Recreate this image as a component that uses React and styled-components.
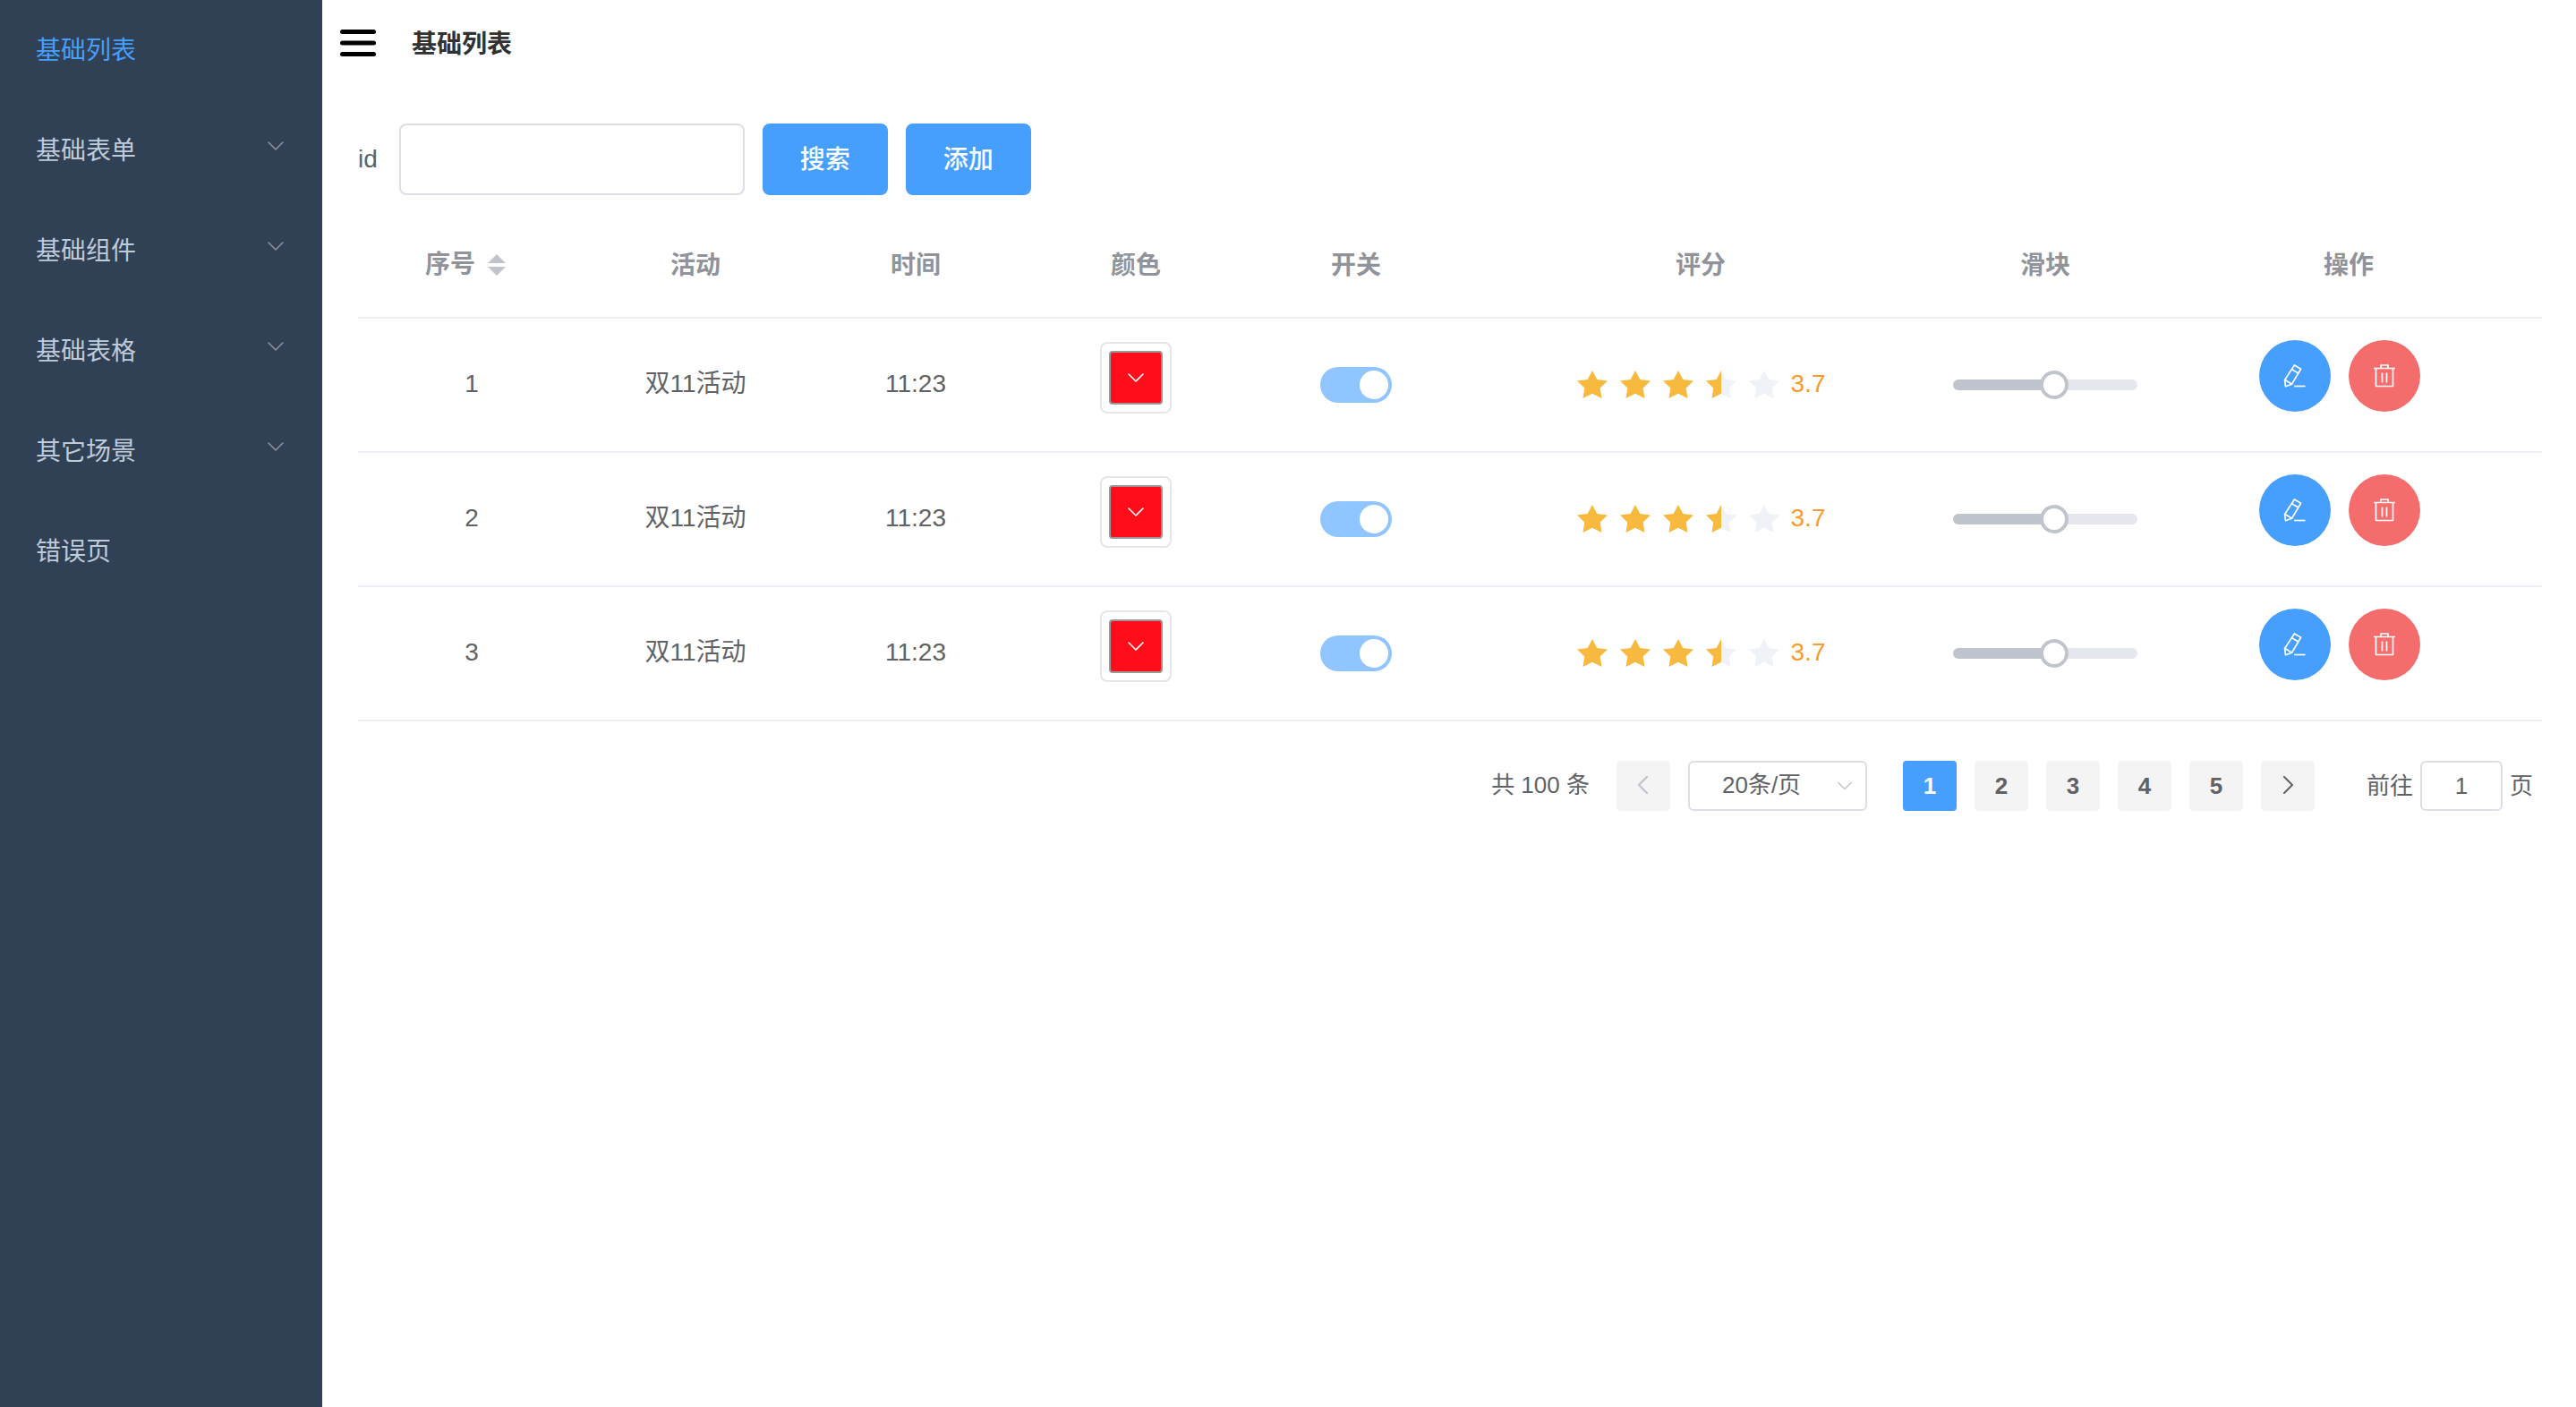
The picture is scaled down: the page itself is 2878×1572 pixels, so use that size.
import React, { useState } from "react";
import styled, { createGlobalStyle } from "styled-components";

const GlobalStyle = createGlobalStyle`
  *, *::before, *::after { box-sizing: border-box; }
  body {
    margin: 0;
    background: #fff;
    color: #606266;
    font-family: "Liberation Sans", "Noto Sans CJK SC", sans-serif;
    font-size: 28px;
    line-height: 40px;
  }
  button, input, select { font: inherit; color: inherit; margin: 0; }
  button { cursor: pointer; }
`;

const Layout = styled.div`
  display: flex;
  min-height: 100vh;
`;

const Sidebar = styled.nav`
  flex: 0 0 360px;
  background: #304156;
`;

const MenuList = styled.ul`
  list-style: none;
  margin: 0;
  padding: 0;
`;

const MenuLink = styled.a`
  display: flex;
  align-items: center;
  height: 112px;
  padding: 2px 40px 0;
  color: ${(p) => (p.$active ? "#479ffd" : "#bfcbd9")};
  text-decoration: none;
`;

const MenuToggle = styled.button`
  display: flex;
  align-items: center;
  justify-content: space-between;
  width: 100%;
  height: 112px;
  padding: 2px 43px 0 40px;
  border: 0;
  background: none;
  color: #bfcbd9;

  svg { margin-bottom: 12px; color: #909399; }
`;

const Main = styled.main`
  flex: 1;
  min-width: 0;
`;

const Header = styled.header`
  display: flex;
  align-items: center;
  gap: 40px;
  height: 96px;
  padding: 0 20px;
`;

const IconButton = styled.button`
  display: flex;
  padding: 0;
  border: 0;
  background: none;
`;

const Title = styled.h1`
  margin: 0;
  padding-top: 4px;
  font-size: 28px;
  font-weight: 700;
  color: #303133;
`;

const Content = styled.section`
  padding: 42px 38px 0 40px;
`;

const SearchForm = styled.form`
  display: flex;
  align-items: center;
  gap: 20px;
  margin-bottom: 20px;
`;

const Field = styled.label`
  display: flex;
  align-items: center;
  gap: 24px;
`;

const TextInput = styled.input`
  width: 386px;
  height: 80px;
  padding: 0 30px;
  border: 2px solid #dcdfe6;
  border-radius: 8px;
  background: #fff;
`;

const PrimaryButton = styled.button`
  width: 140px;
  height: 80px;
  padding: 2px 0 0;
  border: 0;
  border-radius: 8px;
  background: #479ffd;
  color: #fff;
  font-weight: 500;
`;

const Table = styled.table`
  width: 100%;
  table-layout: fixed;
  border-collapse: separate;
  border-spacing: 0;
  text-align: center;
`;

const HeadCell = styled.th`
  height: 118px;
  padding: ${(p) => (p.$sortable ? "0" : "2px 0 0")};
  border-bottom: 2px solid #ebeef5;
  color: #909399;
  font-weight: 700;
`;

const SortLabel = styled.span`
  display: inline-flex;
  align-items: center;
`;

const SortButton = styled(IconButton)`
  justify-content: center;
  width: 48px;
  color: #c0c4cc;
`;

const Cell = styled.td`
  height: 150px;
  padding: 24px 20px;
  border-bottom: 2px solid #ebeef5;
  vertical-align: ${(p) => (p.$top ? "top" : "middle")};
`;

const TextCell = styled(Cell)`
  padding-bottom: 26px;
`;

const ColorTrigger = styled.button`
  display: block;
  width: 80px;
  height: 80px;
  margin: 2px auto 0;
  padding: 8px;
  border: 2px solid #e6e6e6;
  border-radius: 8px;
  background: none;
`;

const Swatch = styled.span`
  display: flex;
  align-items: center;
  justify-content: center;
  height: 60px;
  border: 2px solid #999;
  border-radius: 4px;
  background: ${(p) => p.$color};
  color: #fff;
`;

const Switch = styled.input.attrs({ type: "checkbox", role: "switch" })`
  appearance: none;
  display: flex;
  align-items: center;
  justify-content: ${(p) => (p.checked ? "flex-end" : "flex-start")};
  width: 80px;
  height: 40px;
  margin: 0 auto;
  padding: 4px;
  border-radius: 20px;
  background: ${(p) => (p.checked ? "#91c5ff" : "#dcdfe6")};

  &::before {
    content: "";
    width: 32px;
    height: 32px;
    border-radius: 50%;
    background: #fff;
  }
`;

const Rating = styled.div`
  display: flex;
  align-items: center;
  justify-content: center;

  svg { margin-right: 12px; }
`;

const Score = styled.span`
  padding-bottom: 2px;
  color: #f99b2b;
`;

const Slider = styled.input.attrs({ type: "range" })`
  appearance: none;
  display: block;
  width: 100%;
  height: 32px;
  background: none;

  &::-webkit-slider-runnable-track {
    height: 12px;
    border-radius: 6px;
    background: linear-gradient(to right, #c0c4cc 50%, #e4e7ed 50%);
  }
  &::-webkit-slider-thumb {
    appearance: none;
    width: 32px;
    height: 32px;
    margin-top: -10px;
    border: 4px solid #c0c4cc;
    border-radius: 50%;
    background: #fff;
  }
`;

const Actions = styled.div`
  display: flex;
  justify-content: center;
`;

const RoundButton = styled.button`
  display: flex;
  align-items: center;
  justify-content: center;
  width: 80px;
  height: 80px;
  margin-right: 20px;
  padding: 0;
  border: 0;
  border-radius: 50%;
  background: ${(p) => (p.$danger ? "#f56c6c" : "#479ffd")};
  color: #fff;
`;

const Pagination = styled.nav`
  display: flex;
  align-items: center;
  justify-content: flex-end;
  gap: 20px;
  padding: 44px 10px;
  font-size: 26px;
`;

const Total = styled.span`
  margin-right: 10px;
  padding-bottom: 2px;
`;

const PageButton = styled.button`
  display: flex;
  align-items: center;
  justify-content: center;
  width: 60px;
  height: 56px;
  padding: 0;
  border: 0;
  border-radius: 4px;
  background: ${(p) => (p.$active ? "#479ffd" : "#f4f4f5")};
  color: ${(p) => (p.$active ? "#fff" : "#606266")};
  font-weight: 700;

  &:disabled { color: #c0c4cc; }
`;

const SizePicker = styled.span`
  display: grid;
  align-items: center;
  width: 200px;
  margin-right: 20px;

  > * { grid-area: 1 / 1; }
  svg {
    justify-self: end;
    margin-right: 17px;
    color: #c0c4cc;
    pointer-events: none;
  }
`;

const SizeSelect = styled.select`
  appearance: none;
  width: 100%;
  height: 56px;
  padding: 0 36px 2px;
  border: 2px solid #dcdfe6;
  border-radius: 6px;
  background: #fff;
`;

const Jumper = styled.label`
  display: flex;
  align-items: center;
  gap: 8px;
  margin-left: 38px;
`;

const JumpInput = styled.input`
  width: 92px;
  height: 56px;
  padding: 0;
  border: 2px solid #dcdfe6;
  border-radius: 6px;
  background: #fff;
  text-align: center;
`;

const ChevronDown = ({ width = 18 }) => (
  <svg width={width} height="10" viewBox="0 0 18 10" fill="none" stroke="currentColor" strokeWidth="1.6" strokeLinecap="round" strokeLinejoin="round" aria-hidden="true">
    <path d="M1 1l8 8 8-8" />
  </svg>
);

const ChevronSide = ({ next }) => (
  <svg width="12" height="22" viewBox="0 0 12 22" fill="none" stroke="currentColor" strokeWidth={next ? 2 : 2.4} strokeLinecap="round" strokeLinejoin="round" aria-hidden="true">
    <path d={next ? "M2 1l9 9-9 9" : "M10 1L1 10l9 9"} />
  </svg>
);

const MenuIcon = () => (
  <svg width="40" height="30" viewBox="0 0 40 30" fill="#000" aria-hidden="true">
    <rect width="40" height="5" rx="2.5" />
    <rect y="12.5" width="40" height="5" rx="2.5" />
    <rect y="25" width="40" height="5" rx="2.5" />
  </svg>
);

const SortIcon = () => (
  <svg width="20" height="24" viewBox="0 0 20 24" fill="currentColor" aria-hidden="true">
    <path d="M10 0l10 10H0zM0 14h20L10 24z" />
  </svg>
);

const EditIcon = () => (
  <svg width="28" height="28" viewBox="0 0 28 28" fill="none" stroke="currentColor" strokeWidth="1.7" strokeLinejoin="round" aria-hidden="true">
    <path d="M13.4 2l7.200 4.200L10.500 23.300l-7 2.500-.9-7.300zM10.600 6.700l7.200 4.200M3 18.500l7.500 4.800" />
    <path d="M13 25.500h12.500" />
  </svg>
);

const DeleteIcon = () => (
  <svg width="28" height="28" viewBox="0 0 28 28" fill="none" stroke="currentColor" strokeWidth="1.7" aria-hidden="true">
    <path d="M2 5.500h24M4.500 5.500v20h19v-20M10 5.500V2h8v3.500M11.500 10.500v11M16.500 10.500v11" />
  </svg>
);

const Star = ({ fill }) => (
  <svg width="36" height="36" viewBox="0 0 36 36" aria-hidden="true">
    <path
      d="M18 2l5.300 9.900L35 13.400l-8.300 8.200L28.500 33 18 27.700 7.500 33l1.800-11.400L1 13.400l11.700-1.500z"
      fill={fill > 0.9 ? "#f7ba3e" : "#eff2f7"}
    />
    {fill > 0 && fill < 0.9 && (
      <path d="M18 2v25.700L7.500 33l1.800-11.400L1 13.400l11.700-1.500z" fill="#f7ba3e" />
    )}
  </svg>
);

const MENU = [
  { text: "基础列表", active: true },
  { text: "基础表单", sub: true },
  { text: "基础组件", sub: true },
  { text: "基础表格", sub: true },
  { text: "其它场景", sub: true },
  { text: "错误页" },
];

const COLUMNS = [
  { text: "序号", width: 254, sort: true },
  { text: "活动", width: 246 },
  { text: "时间", width: 246 },
  { text: "颜色", width: 246 },
  { text: "开关", width: 246 },
  { text: "评分", width: 524 },
  { text: "滑块", width: 246 },
  { text: "操作", width: 432 },
];

const ROWS = [1, 2, 3].map((id) => ({
  id,
  name: "双11活动",
  time: "11:23",
  color: "#ff0d1b",
  score: 3.7,
  progress: 56,
}));

function Row({ row }) {
  const [on, setOn] = useState(true);
  return (
    <tr>
      <TextCell>{row.id}</TextCell>
      <TextCell>{row.name}</TextCell>
      <TextCell>{row.time}</TextCell>
      <Cell $top>
        <ColorTrigger type="button" aria-label="选择颜色">
          <Swatch $color={row.color}><ChevronDown /></Swatch>
        </ColorTrigger>
      </Cell>
      <Cell>
        <Switch aria-label="开关" checked={on} onChange={() => setOn(!on)} />
      </Cell>
      <Cell>
        <Rating>
          {[0, 1, 2, 3, 4].map((i) => <Star key={i} fill={row.score - i} />)}
          <Score>{row.score}</Score>
        </Rating>
      </Cell>
      <Cell>
        <Slider aria-label="滑块" defaultValue={row.progress} />
      </Cell>
      <Cell $top>
        <Actions>
          <RoundButton type="button" aria-label="编辑"><EditIcon /></RoundButton>
          <RoundButton type="button" aria-label="删除" $danger><DeleteIcon /></RoundButton>
        </Actions>
      </Cell>
    </tr>
  );
}

export default function App() {
  const [page, setPage] = useState(1);
  return (
    <>
      <GlobalStyle />
      <Layout>
        <Sidebar>
          <MenuList>
            {MENU.map((item) => (
              <li key={item.text}>
                {item.sub ? (
                  <MenuToggle type="button" aria-expanded="false">
                    {item.text}
                    <ChevronDown />
                  </MenuToggle>
                ) : (
                  <MenuLink href="#" $active={item.active}>{item.text}</MenuLink>
                )}
              </li>
            ))}
          </MenuList>
        </Sidebar>
        <Main>
          <Header>
            <IconButton type="button" aria-label="菜单"><MenuIcon /></IconButton>
            <Title>基础列表</Title>
          </Header>
          <Content>
            <SearchForm onSubmit={(e) => e.preventDefault()}>
              <Field>
                id
                <TextInput name="id" />
              </Field>
              <PrimaryButton type="submit">搜索</PrimaryButton>
              <PrimaryButton type="button">添加</PrimaryButton>
            </SearchForm>
            <Table>
              <colgroup>
                {COLUMNS.map((c) => <col key={c.text} width={c.width} />)}
              </colgroup>
              <thead>
                <tr>
                  {COLUMNS.map((c) => (
                    <HeadCell key={c.text} scope="col" $sortable={c.sort}>
                      {c.sort ? (
                        <SortLabel>
                          {c.text}
                          <SortButton type="button" aria-label="排序"><SortIcon /></SortButton>
                        </SortLabel>
                      ) : c.text}
                    </HeadCell>
                  ))}
                </tr>
              </thead>
              <tbody>
                {ROWS.map((row) => <Row key={row.id} row={row} />)}
              </tbody>
            </Table>
            <Pagination aria-label="分页">
              <Total>共 100 条</Total>
              <PageButton type="button" aria-label="上一页" disabled><ChevronSide /></PageButton>
              <SizePicker>
                <SizeSelect aria-label="每页条数" defaultValue="20">
                  <option value="20">20条/页</option>
                </SizeSelect>
                <ChevronDown width={16} />
              </SizePicker>
              {[1, 2, 3, 4, 5].map((n) => (
                <PageButton key={n} type="button" $active={n === page} onClick={() => setPage(n)}>{n}</PageButton>
              ))}
              <PageButton type="button" aria-label="下一页"><ChevronSide next /></PageButton>
              <Jumper>
                前往
                <JumpInput name="page" defaultValue="1" />
                页
              </Jumper>
            </Pagination>
          </Content>
        </Main>
      </Layout>
    </>
  );
}
